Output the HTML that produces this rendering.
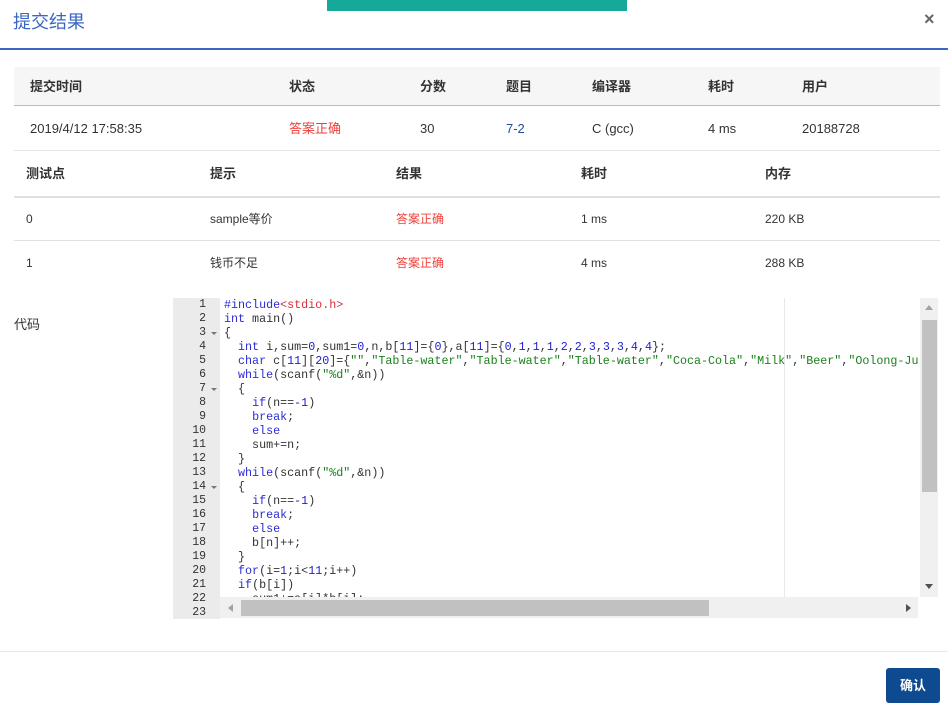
<!DOCTYPE html>
<html><head><meta charset="utf-8"><style>
*{margin:0;padding:0;box-sizing:border-box}
body{width:948px;height:706px;background:#fff;font-family:"Liberation Sans","Noto Sans CJK SC",sans-serif;font-size:13px;color:#333;position:relative;overflow:hidden}
.a{position:absolute;white-space:nowrap;line-height:16px}
.b{font-weight:bold;color:#333}
.red{color:#f0413b}
.code{position:absolute;left:224px;top:298px;width:694px;height:299px;overflow:hidden;font-family:"Liberation Mono",monospace;font-size:11.7px;line-height:14px;color:#333}
.code div{height:14px;white-space:pre}
.k{color:#2c2cd8}.s{color:#1a801a}.n{color:#2020d0}.r{color:#d8303a}
.gut{position:absolute;left:173px;top:298px;width:47px;height:321px;background:#ebebeb;font-family:"Liberation Mono",monospace;font-size:11.5px;line-height:14px;color:#333}
.gut div{height:14px;text-align:right;padding-right:14px;position:relative}
.f:after{content:"";position:absolute;right:3px;top:6px;border:3px solid transparent;border-top:3px solid #777}
</style></head><body>
<div class="a" style="left:327px;top:0;width:300px;height:11px;background:#16a898"></div>
<div class="a" style="left:13px;top:12px;font-size:18px;line-height:20px;color:#3a66c4">提交结果</div>
<div class="a" style="left:924px;top:9px;font-size:18px;line-height:20px;color:#666;font-weight:bold">×</div>
<div class="a" style="left:0;top:48px;width:948px;height:2px;background:#3a66c4"></div>

<div class="a" style="left:14px;top:67px;width:926px;height:39px;background:#f6f6f6;border-bottom:1px solid #bbb"></div>
<div class="a b" style="left:30px;top:79px">提交时间</div>
<div class="a b" style="left:289px;top:79px">状态</div>
<div class="a b" style="left:420px;top:79px">分数</div>
<div class="a b" style="left:506px;top:79px">题目</div>
<div class="a b" style="left:592px;top:79px">编译器</div>
<div class="a b" style="left:708px;top:79px">耗时</div>
<div class="a b" style="left:802px;top:79px">用户</div>
<div class="a" style="left:30px;top:121px">2019/4/12 17:58:35</div>
<div class="a red" style="left:289px;top:121px">答案正确</div>
<div class="a" style="left:420px;top:121px">30</div>
<div class="a" style="left:506px;top:121px;color:#1d4f91">7-2</div>
<div class="a" style="left:592px;top:121px">C (gcc)</div>
<div class="a" style="left:708px;top:121px">4 ms</div>
<div class="a" style="left:802px;top:121px">20188728</div>
<div class="a" style="left:14px;top:150px;width:926px;height:1px;background:#e4e4e4"></div>

<div class="a b" style="left:26px;top:166px">测试点</div>
<div class="a b" style="left:210px;top:166px">提示</div>
<div class="a b" style="left:396px;top:166px">结果</div>
<div class="a b" style="left:581px;top:166px">耗时</div>
<div class="a b" style="left:765px;top:166px">内存</div>
<div class="a" style="left:14px;top:196px;width:926px;height:2px;background:#dde0e4"></div>
<div class="a" style="left:26px;top:211px;font-size:12px">0</div>
<div class="a" style="left:210px;top:211px;font-size:12px">sample等价</div>
<div class="a red" style="left:396px;top:211px;font-size:12px">答案正确</div>
<div class="a" style="left:581px;top:211px;font-size:12px">1 ms</div>
<div class="a" style="left:765px;top:211px;font-size:12px">220 KB</div>
<div class="a" style="left:14px;top:240px;width:926px;height:1px;background:#e0e0e0"></div>
<div class="a" style="left:26px;top:255px;font-size:12px">1</div>
<div class="a" style="left:210px;top:255px;font-size:12px">钱币不足</div>
<div class="a red" style="left:396px;top:255px;font-size:12px">答案正确</div>
<div class="a" style="left:581px;top:255px;font-size:12px">4 ms</div>
<div class="a" style="left:765px;top:255px;font-size:12px">288 KB</div>

<div class="a" style="left:14px;top:317px">代码</div>

<div class="gut"><div>1</div><div>2</div><div class="f">3</div><div>4</div><div>5</div><div>6</div><div class="f">7</div><div>8</div><div>9</div><div>10</div><div>11</div><div>12</div><div>13</div><div class="f">14</div><div>15</div><div>16</div><div>17</div><div>18</div><div>19</div><div>20</div><div>21</div><div>22</div><div>23</div></div>
<div class="a" style="left:784px;top:298px;width:1px;height:299px;background:#e8e8e8"></div>
<div class="code">
<div><span class="k">#include</span><span class="r">&lt;stdio.h&gt;</span></div>
<div><span class="k">int</span> main()</div>
<div>{</div>
<div>  <span class="k">int</span> i,sum=<span class="n">0</span>,sum1=<span class="n">0</span>,n,b[<span class="n">11</span>]={<span class="n">0</span>},a[<span class="n">11</span>]={<span class="n">0</span>,<span class="n">1</span>,<span class="n">1</span>,<span class="n">1</span>,<span class="n">2</span>,<span class="n">2</span>,<span class="n">3</span>,<span class="n">3</span>,<span class="n">3</span>,<span class="n">4</span>,<span class="n">4</span>};</div>
<div>  <span class="k">char</span> c[<span class="n">11</span>][<span class="n">20</span>]={<span class="s">""</span>,<span class="s">"Table-water"</span>,<span class="s">"Table-water"</span>,<span class="s">"Table-water"</span>,<span class="s">"Coca-Cola"</span>,<span class="s">"Milk"</span>,<span class="s">"Beer"</span>,<span class="s">"Oolong-Juice"</span></div>
<div>  <span class="k">while</span>(scanf(<span class="s">"%d"</span>,&amp;n))</div>
<div>  {</div>
<div>    <span class="k">if</span>(n==<span class="n">-1</span>)</div>
<div>    <span class="k">break</span>;</div>
<div>    <span class="k">else</span></div>
<div>    sum+=n;</div>
<div>  }</div>
<div>  <span class="k">while</span>(scanf(<span class="s">"%d"</span>,&amp;n))</div>
<div>  {</div>
<div>    <span class="k">if</span>(n==<span class="n">-1</span>)</div>
<div>    <span class="k">break</span>;</div>
<div>    <span class="k">else</span></div>
<div>    b[n]++;</div>
<div>  }</div>
<div>  <span class="k">for</span>(i=<span class="n">1</span>;i&lt;<span class="n">11</span>;i++)</div>
<div>  <span class="k">if</span>(b[i])</div>
<div>    sum1+=a[i]*b[i];</div>
</div>
<div class="a" style="left:920px;top:298px;width:18px;height:299px;background:#f0f0f0"></div>
<div class="a" style="left:922px;top:320px;width:15px;height:172px;background:#c1c1c1"></div>
<div class="a" style="left:925px;top:305px;border:4px solid transparent;border-bottom:5px solid #a3a3a3;border-top:0"></div>
<div class="a" style="left:925px;top:584px;border:4px solid transparent;border-top:5px solid #505050;border-bottom:0"></div>
<div class="a" style="left:220px;top:597px;width:698px;height:21px;background:#f0f0f0"></div>
<div class="a" style="left:241px;top:600px;width:468px;height:16px;background:#c1c1c1"></div>
<div class="a" style="left:228px;top:604px;border:4px solid transparent;border-right:5px solid #a3a3a3;border-left:0"></div>
<div class="a" style="left:906px;top:604px;border:4px solid transparent;border-left:5px solid #505050;border-right:0"></div>

<div class="a" style="left:0;top:651px;width:948px;height:1px;background:#e8e8e8"></div>
<div class="a" style="left:886px;top:668px;width:54px;height:35px;background:#0e4a90;border-radius:3px;color:#fff;font-weight:bold;font-size:13px;text-align:center;line-height:35px">确认</div>
</body></html>
